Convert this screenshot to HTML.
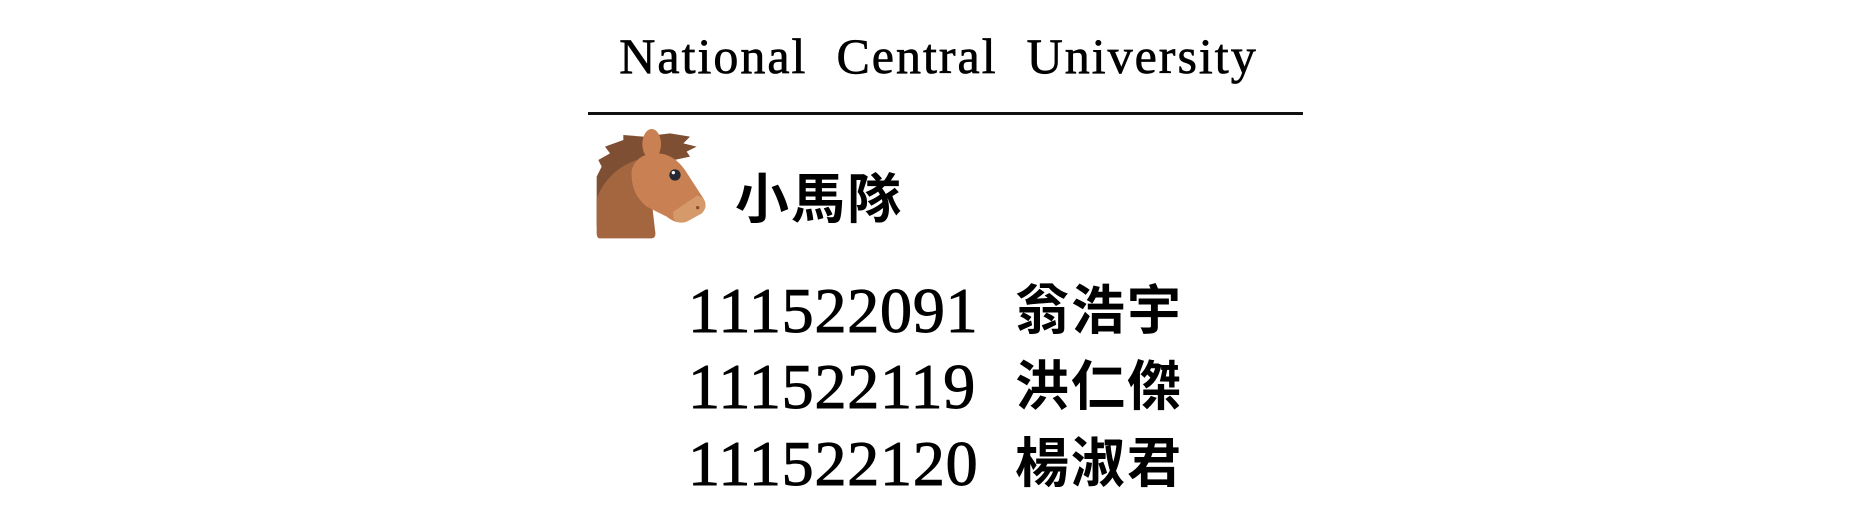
<!DOCTYPE html>
<html><head><meta charset="utf-8"><style>
html,body{margin:0;padding:0;background:#fff;width:1876px;height:507px;overflow:hidden;position:relative}
.t{position:absolute;left:581px;width:715px;top:27px;text-align:center;font-family:"Liberation Serif",serif;font-size:50px;color:#000;white-space:pre;letter-spacing:2px;-webkit-text-stroke:0.7px #000}
.line{position:absolute;left:588px;top:112px;width:715px;height:3px;background:#111}
.team{position:absolute;left:735px;top:168px;font-family:"Liberation Sans","Noto Sans CJK TC",sans-serif;font-size:54px;font-weight:bold;letter-spacing:2px;color:#000;line-height:64px}
.row{position:absolute;left:688px;font-family:"Liberation Serif",serif;font-size:64px;line-height:76px;color:#000;white-space:pre;letter-spacing:0.8px;-webkit-text-stroke:1px #000}
.row span{font-family:"Liberation Sans","Noto Sans CJK TC",sans-serif;font-size:54px;font-weight:bold;-webkit-text-stroke:0;letter-spacing:2px;position:absolute;left:327px;top:0}
</style></head><body>
<div class="t">National  Central  University</div>
<div class="line"></div>
<svg style="position:absolute;left:590px;top:120px" width="130" height="125" viewBox="0 0 390 375">
<path fill="#7f4f33" d="M20,320 L20,170 L35,140 L25,120 L60,100 L45,80 L100,60 L100,45 L160,50 L200,45 L240,40 L300,50 L280,70 L320,80 L290,95 L300,110 L230,125 L150,140 Z"/>
<path fill="#a3663f" d="M30,355 Q20,355 20,340 L20,235 Q60,135 170,112 L195,330 Q200,355 185,355 Z"/>
<ellipse cx="185" cy="72" rx="28" ry="45" fill="#c98052"/>
<path fill="#c98052" d="M125,150 Q140,100 200,100 Q250,100 285,150 L340,235 Q355,260 335,280 L290,305 Q260,315 230,290 L170,260 Q120,220 125,150 Z"/>
<path fill="#d6996a" d="M250,275 L322,226 L340,235 Q355,260 335,280 L290,305 Q262,314 250,295 Z"/>
<circle cx="255" cy="165" r="17" fill="#262833"/>
<circle cx="250" cy="158" r="5" fill="#fff"/>
<circle cx="323" cy="263" r="5" fill="#8a4a2a"/>
</svg>
<div class="team">小馬隊</div>
<div class="row" style="top:273px">111522091<span>翁浩宇</span></div>
<div class="row" style="top:349px">111522119<span>洪仁傑</span></div>
<div class="row" style="top:426px">111522120<span>楊淑君</span></div>
</body></html>
